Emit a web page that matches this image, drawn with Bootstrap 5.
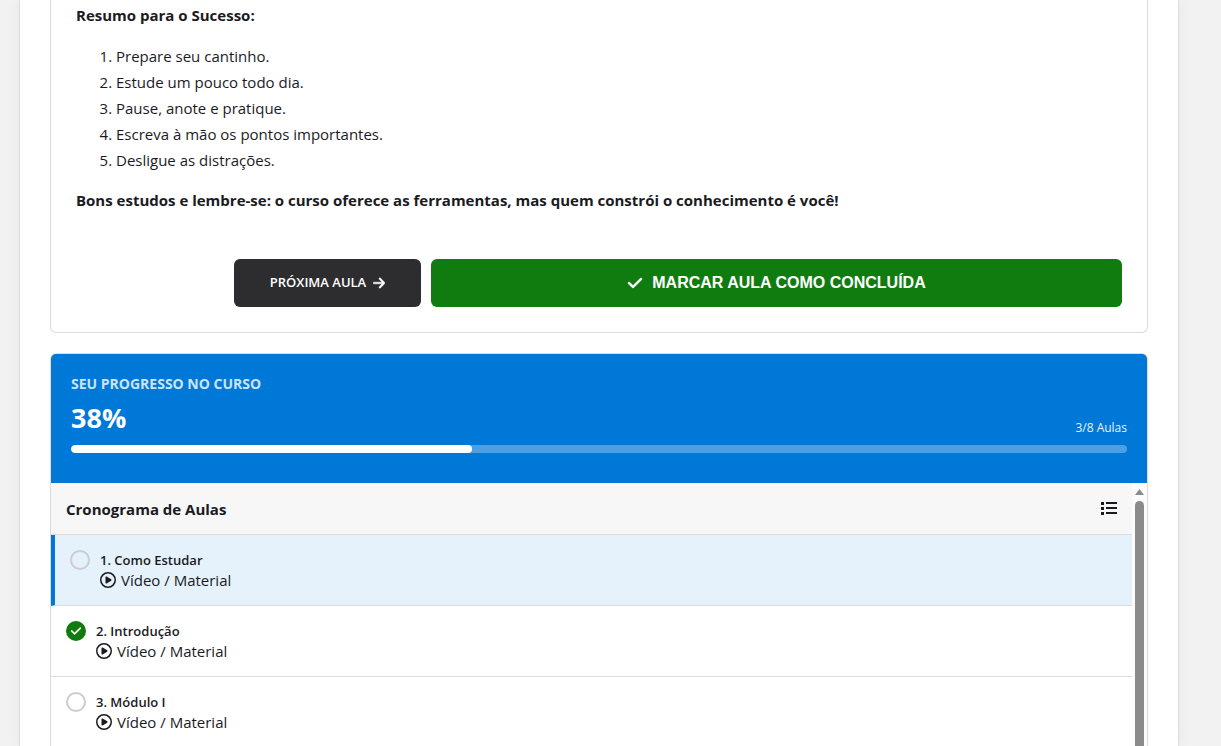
<!DOCTYPE html>
<html lang="pt-BR">
<head>
<meta charset="utf-8">
<meta name="viewport" content="width=device-width, initial-scale=1">
<title>Como Estudar</title>
<link href="https://cdn.jsdelivr.net/npm/bootstrap@5.3.0/dist/css/bootstrap.min.css" rel="stylesheet">
<style>
  body { background: #f2f2f2; color: #1b1b1f; font-family: "Open Sans", "Noto Sans", sans-serif; font-size: 15px; line-height: 26px; padding: 0 42px 0 19px; }
  .page { background: #fff; border: solid #dcdcdc; border-width: 0 1px; box-shadow: 0 0 15px rgba(0,0,0,.05); padding: 0 30px; }
  .panel { border: 1px solid #dcdcdc; border-radius: 6px; }
  .lesson { border-top: 0; border-radius: 0 0 6px 6px; padding: 2px 25px 25px; }
  .lesson p { margin-bottom: 15px; }
  .lesson ol { margin-bottom: 14px; padding-left: 40px; }
  .actions { gap: 10px; margin: 46px 0 0 158px; }
  .actions .btn { height: 48px; border: 0; border-radius: 6px; color: #fff; padding: 0; }
  .btn-next { background: #2d2d30; width: 187px; font-size: 13px; font-weight: 600; gap: 7px; }
  .btn-done { background: #107c10; font: bold 16px/24px "Liberation Sans", Arial, sans-serif; gap: 9px; }
  svg { fill: currentColor; display: block; flex: none; }
  .btn svg, .state svg { stroke: currentColor; stroke-width: 16px; }
  .course { margin-top: 20px; overflow: hidden; }
  .summary { background: #0078d7; color: #fff; padding: 20px 20px 30px; }
  .summary-label { font-size: 14px; font-weight: 700; line-height: 20px; opacity: .8; }
  .summary-pct { font-size: 27px; font-weight: 700; line-height: 40px; margin: 4px 0 7px; }
  .summary-count { font-size: 12px; line-height: 20px; opacity: .9; margin-bottom: 7px; }
  .summary .progress { height: 8px; border-radius: 4px; background: rgba(255,255,255,.3); }
  .summary .progress-bar { background: #fff; border-radius: 4px; }
  .list-top { background: #f7f7f7; border-bottom: 1px solid #dcdcdc; padding: 0 15px; height: 52px; }
  .list-top h2 { font-size: 15px; font-weight: 700; line-height: 26px; margin: 0; }
  .item { color: inherit; text-decoration: none; border-bottom: 1px solid #dcdcdc; padding: 15px; gap: 10px; line-height: 20px; }
  .item.active { background: #e5f1fb; border-left: 4px solid #0078d7; }
  .item-title { font-size: 13px; font-weight: 600; }
  .item-kind { gap: 5px; }
  .state { width: 20px; height: 20px; border: 2px solid #ccc; border-radius: 50%; flex: none; }
  .state.done { background: #107c10; border-color: #107c10; color: #fff; }
  .track { width: 15px; background: #fcfcfc; color: #8b8b8b; padding: 6px 3px 0; gap: 6px; }
  .thumb { width: 9px; border-radius: 5px 5px 0 0; background: #8b8b8b; }
</style>
</head>
<body class="vh-100 overflow-hidden">
<svg class="d-none" aria-hidden="true">
  <symbol id="arrow" viewBox="0 0 448 512"><path d="M438.600 278.600c12.500-12.500 12.500-32.800 0-45.300l-160-160c-12.500-12.500-32.800-12.500-45.300 0s-12.500 32.800 0 45.300L338.800 224 32 224c-17.700 0-32 14.300-32 32s14.300 32 32 32l306.700 0L233.400 393.400c-12.500 12.500-12.500 32.800 0 45.300s32.800 12.500 45.300 0l160-160z"/></symbol>
  <symbol id="check" viewBox="0 0 448 512"><path d="M438.600 105.400c12.500 12.500 12.500 32.800 0 45.300l-256 256c-12.500 12.500-32.800 12.500-45.300 0l-128-128c-12.500-12.500-12.500-32.800 0-45.300s32.800-12.500 45.300 0L160 338.700 393.400 105.400c12.500-12.500 32.800-12.500 45.300 0z"/></symbol>
  <symbol id="play" viewBox="0 0 512 512"><path d="M464 256A208 208 0 1 0 48 256a208 208 0 1 0 416 0zM0 256a256 256 0 1 1 512 0A256 256 0 1 1 0 256zM188.300 147.100c7.600-4.200 16.800-4.100 24.300 .5l144 88c7.100 4.400 11.500 12.100 11.500 20.500s-4.400 16.100-11.500 20.500l-144 88c-7.400 4.500-16.700 4.700-24.300 .5s-12.300-12.200-12.300-20.900l0-176c0-8.700 4.700-16.700 12.300-20.900z"/></symbol>
</svg>
<main class="page h-100 d-flex flex-column">
  <article class="panel lesson flex-shrink-0">
    <p><strong>Resumo para o Sucesso:</strong></p>
    <ol>
      <li>Prepare seu cantinho.</li>
      <li>Estude um pouco todo dia.</li>
      <li>Pause, anote e pratique.</li>
      <li>Escreva à mão os pontos importantes.</li>
      <li>Desligue as distrações.</li>
    </ol>
    <p class="mb-0"><strong>Bons estudos e lembre-se: o curso oferece as ferramentas, mas quem constrói o conhecimento é você!</strong></p>
    <div class="actions d-flex">
      <button type="button" class="btn btn-next d-flex align-items-center justify-content-center">PRÓXIMA AULA <svg width="12" height="14"><use href="#arrow"/></svg></button>
      <button type="button" class="btn btn-done flex-fill d-flex align-items-center justify-content-center"><svg width="16" height="16"><use href="#check"/></svg>MARCAR AULA COMO CONCLUÍDA</button>
    </div>
  </article>

  <section class="panel course flex-fill d-flex flex-column border-bottom-0 rounded-bottom-0">
    <div class="summary">
      <div class="summary-label">SEU PROGRESSO NO CURSO</div>
      <div class="d-flex justify-content-between align-items-end">
        <div class="summary-pct">38%</div>
        <div class="summary-count">3/8 Aulas</div>
      </div>
      <div class="progress" role="progressbar" aria-label="Progresso" aria-valuenow="38" aria-valuemin="0" aria-valuemax="100"><div class="progress-bar" style="width:38%"></div></div>
    </div>
    <div class="d-flex flex-fill overflow-hidden">
      <div class="flex-fill">
        <div class="list-top d-flex align-items-center justify-content-between">
          <h2>Cronograma de Aulas</h2>
          <svg width="16" height="16" viewBox="0 0 16 16"><path d="M0 1h3v3H0zM0 6h3v3H0zM0 11h3v3H0zM5 1h11v2H5zM5 6h11v2H5zM5 11h11v2H5z"/></svg>
        </div>
        <nav>
          <a href="#" class="item active d-flex"><span class="state"></span><span><span class="item-title d-block">1. Como Estudar</span><span class="item-kind d-flex align-items-center"><svg width="16" height="16"><use href="#play"/></svg>Vídeo / Material</span></span></a>
          <a href="#" class="item d-flex"><span class="state done d-flex align-items-center justify-content-center"><svg width="10" height="12"><use href="#check"/></svg></span><span><span class="item-title d-block">2. Introdução</span><span class="item-kind d-flex align-items-center"><svg width="16" height="16"><use href="#play"/></svg>Vídeo / Material</span></span></a>
          <a href="#" class="item d-flex"><span class="state"></span><span><span class="item-title d-block">3. Módulo I</span><span class="item-kind d-flex align-items-center"><svg width="16" height="16"><use href="#play"/></svg>Vídeo / Material</span></span></a>
        </nav>
      </div>
      <div class="track d-flex flex-column" aria-hidden="true">
        <svg width="9" height="6" viewBox="0 0 9 6"><path d="M4.500 0 9 6H0z"/></svg>
        <div class="thumb flex-fill"></div>
      </div>
    </div>
  </section>
</main>
<script src="https://cdn.jsdelivr.net/npm/bootstrap@5.3.0/dist/js/bootstrap.bundle.min.js"></script>
</body>
</html>
